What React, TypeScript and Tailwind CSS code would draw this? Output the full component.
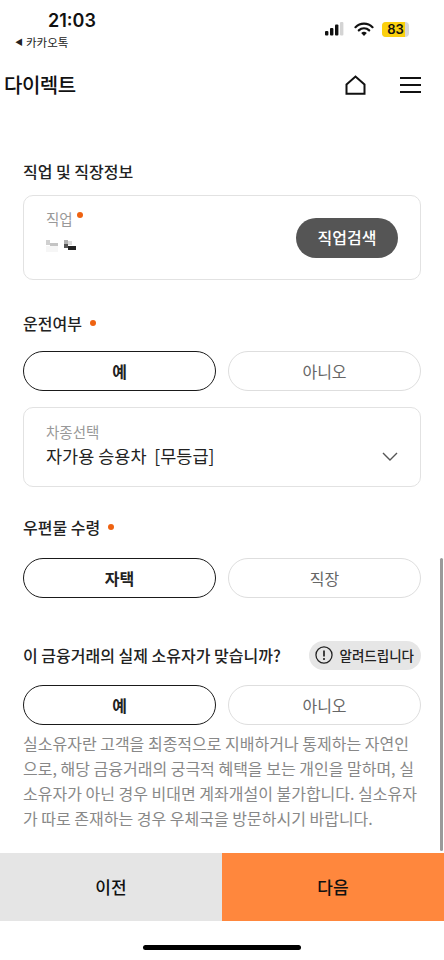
import React from 'react';

const font = 'font-["Noto_Sans_CJK_KR","Liberation_Sans",sans-serif]';

const Dot = ({ className = '' }: { className?: string }) => (
  <span className={`inline-block w-[6px] h-[6px] rounded-full bg-[#ee6211] ${className}`} />
);

const ChoiceRow = ({ left, right }: { left: string; right: string }) => (
  <div className="flex gap-3">
    <div className="flex-1 h-10 rounded-full border-[1.5px] border-[#1a1a1a] flex items-center justify-center text-[16px] font-bold text-[#222]">
      {left}
    </div>
    <div className="flex-1 h-10 rounded-full border border-[#dedede] flex items-center justify-center text-[16px] text-[#666]">
      {right}
    </div>
  </div>
);

const StatusBar = () => (
  <div className="h-[60px] relative shrink-0">
    <div className="absolute left-[48px] top-[9px] text-[18px] leading-[24px] font-semibold text-[#111] font-['Inter',sans-serif]">21:03</div>
    <div className="absolute left-[15px] top-[34px] flex items-center gap-[3px] text-[11.5px] leading-[16px] text-[#222]">
      <span className="text-[8px]">◀</span>
      <span>카카오톡</span>
    </div>
    <div className="absolute left-[325px] top-[21px] flex items-center">
      <svg width="21" height="16" viewBox="0 0 21 16" className="mr-[8px]">
        <rect x="0" y="10" width="3.4" height="4.5" rx="1" fill="#111" />
        <rect x="5" y="7" width="3.4" height="7.5" rx="1" fill="#111" />
        <rect x="10" y="3.5" width="3.4" height="11" rx="1" fill="#111" />
        <rect x="15" y="1" width="3.4" height="13.5" rx="1" fill="#d4d4d4" />
      </svg>
      <svg width="20" height="15" viewBox="0 0 20 15" className="mr-[8px]">
        <path d="M1.5 5.2 A12 12 0 0 1 18.5 5.2" fill="none" stroke="#111" strokeWidth="2.2" strokeLinecap="round" />
        <path d="M4.8 8.4 A7.4 7.4 0 0 1 15.2 8.4" fill="none" stroke="#111" strokeWidth="2.2" strokeLinecap="round" />
        <path d="M10 14 L7.2 11 A4 4 0 0 1 12.8 11 Z" fill="#111" />
      </svg>
      <div className="relative w-[27px] h-[15px] rounded-[4px] bg-[#d8d8d8] overflow-hidden">
        <div className="absolute left-0 top-0 bottom-0 w-[23px] bg-[#fbd00e]" />
        <div className="absolute inset-0 flex items-center justify-center text-[13px] leading-none font-semibold text-[#111] font-['Inter',sans-serif]">83</div>
      </div>
    </div>
  </div>
);

const Header = () => (
  <div className="h-[50px] shrink-0 flex items-center justify-between pl-1 pr-[23px]">
    <div className="text-[20px] font-medium text-[#111] tracking-[-0.5px]">다이렉트</div>
    <div className="flex items-center gap-[34px]">
      <svg width="21" height="20" viewBox="0 0 21 20" fill="none">
        <path d="M1.5 9.5 L10.5 1.5 L19.5 9.5 V18.8 H1.5 Z" stroke="#111" strokeWidth="2" strokeLinejoin="miter" />
      </svg>
      <svg width="21" height="18" viewBox="0 0 21 18" fill="none">
        <path d="M0 2H21M0 9H21M0 16H21" stroke="#111" strokeWidth="2" />
      </svg>
    </div>
  </div>
);

// blurred-out job name in the reference
const Mosaic = () => (
  <svg width="32" height="18" viewBox="0 0 32 18">
    <rect x="0" y="2" width="4" height="5" fill="#d0d0d0" />
    <rect x="4" y="5" width="8" height="3" fill="#c4c4c4" />
    <rect x="0" y="8" width="12" height="6" fill="#f6f6f6" />
    <rect x="18" y="2" width="4" height="6" fill="#b0b0b0" />
    <rect x="18" y="6" width="4" height="4" fill="#555" />
    <rect x="22" y="3" width="4" height="4" fill="#dcdcdc" />
    <rect x="22" y="8" width="8" height="4" fill="#222" />
  </svg>
);

export default function App() {
  return (
    <div className={`w-[444px] h-[960px] bg-white flex flex-col overflow-hidden relative ${font}`}>
      <StatusBar />
      <Header />
      <div className="flex-1 px-[23px] pt-[50px] min-h-0 relative">
        <div className="text-[16px] leading-[22px] font-medium text-[#222]">직업 및 직장정보</div>
        <div className="mt-[13px] h-[85px] rounded-[10px] border border-[#e2e2e2] flex items-center justify-between pl-[22px] pr-[22px]">
          <div className="self-start pt-[13px]">
            <div className="flex items-start text-[14.5px] leading-[20px] text-[#999]">
              직업
              <Dot className="ml-[4px] mt-[3px]" />
            </div>
            <div className="mt-[9px]">
              <Mosaic />
            </div>
          </div>
          <div className="w-[102px] h-10 rounded-full bg-[#555] text-white text-[16px] font-medium flex items-center justify-center pb-[2px]">직업검색</div>
        </div>

        <div className="mt-[32px] flex items-center text-[16px] leading-[22px] font-medium text-[#222]">
          운전여부
          <Dot className="ml-[8px]" />
        </div>
        <div className="mt-[17px]">
          <ChoiceRow left="예" right="아니오" />
        </div>
        <div className="mt-[16px] h-[80px] rounded-[10px] border border-[#e2e2e2] pl-[22px] pr-[22px] pt-[15px] relative">
          <div className="text-[14.5px] leading-[18px] text-[#999]">차종선택</div>
          <div className="flex items-center justify-between mt-[2px]">
            <span className="text-[17.5px] leading-[26px] text-[#222]">자가용 승용차&nbsp;&nbsp;[무등급]</span>
            <svg width="16" height="9" viewBox="0 0 16 9" fill="none">
              <path d="M1 1L8 8L15 1" stroke="#555" strokeWidth="1.4" />
            </svg>
          </div>
        </div>

        <div className="mt-[29px] flex items-center text-[16px] leading-[22px] font-medium text-[#222]">
          우편물 수령
          <Dot className="ml-[8px]" />
        </div>
        <div className="mt-[20px]">
          <ChoiceRow left="자택" right="직장" />
        </div>

        <div className="mt-[42px] flex items-center justify-between h-[30px]">
          <span className="text-[16px] font-medium text-[#222]">이 금융거래의 실제 소유자가 맞습니까?</span>
          <span className="h-[29px] rounded-full bg-[#e6e6e6] flex items-center gap-[6px] pl-[6px] pr-[7px] text-[13.5px] font-medium text-[#222]">
            <svg width="18" height="18" viewBox="0 0 17 17" fill="none">
              <circle cx="8.5" cy="8.5" r="7.6" stroke="#222" strokeWidth="1.2" />
              <path d="M8.5 4.2V9.8" stroke="#222" strokeWidth="1.6" />
              <circle cx="8.5" cy="12.3" r="1" fill="#222" />
            </svg>
            알려드립니다
          </span>
        </div>
        <div className="mt-[15px]">
          <ChoiceRow left="예" right="아니오" />
        </div>
        <p className="mt-[6px] text-[16px] leading-[25px] text-[#888] break-all">
          실소유자란 고객을 최종적으로 지배하거나 통제하는 자연인으로, 해당 금융거래의 궁극적 혜택을 보는 개인을 말하며, 실소유자가 아닌 경우 비대면 계좌개설이 불가합니다. 실소유자가 따로 존재하는 경우 우체국을 방문하시기 바랍니다.
        </p>
        <div className="absolute right-[1px] top-[448px] w-[3px] h-[293px] rounded-full bg-[#9a9a9a]" />
      </div>
      <div className="h-[68px] shrink-0 flex">
        <div className="w-[222px] bg-[#e5e5e5] flex items-center justify-center text-[17px] font-medium text-[#111]">이전</div>
        <div className="flex-1 bg-[#ff873d] flex items-center justify-center text-[17px] font-medium text-[#111]">다음</div>
      </div>
      <div className="h-[39px] shrink-0 flex items-start justify-center pt-[24px]">
        <div className="w-[158px] h-[5px] rounded-full bg-black" />
      </div>
    </div>
  );
}
